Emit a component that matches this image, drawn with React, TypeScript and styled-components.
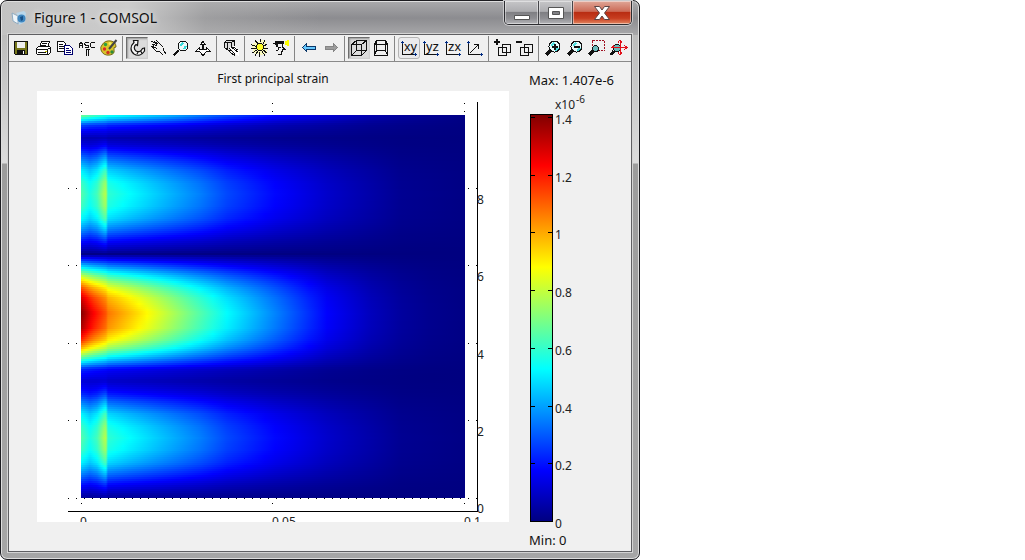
import React from 'react';
import styled, { createGlobalStyle, css } from 'styled-components';

const Global = createGlobalStyle`
  * { box-sizing: border-box; }
  body { margin: 0; background: #fff; color: #111; font-family: "Noto Sans", "Open Sans", sans-serif; }
`;

const Frame = styled.main`
  display: flex;
  flex-direction: column;
  width: 100%;
  max-width: 640px;
  min-height: 100vh;
  padding: 0 7px 7px;
  border: 1px solid #1c1c20;
  border-radius: 7px;
  box-shadow: inset 0 0 0 1px #dedede;
  background:
    linear-gradient(to right, #c2c2c2 0, #cccccc 20%, rgba(176, 176, 176, 0.5) 32%, transparent 50%) no-repeat 0 0 / 100% 34px,
    linear-gradient(#aaaaac, #8c8c90 50%, #a8a8aa) no-repeat 0 0 / 100% 34px,
    linear-gradient(#b4b4b4 0, #dcdcdc 162px, #9c9c9c 163px, #a6a6a6);
`;

const TitleBar = styled.header`
  display: flex;
  align-items: flex-start;
  justify-content: space-between;
  height: 33px;
`;

const Caption = styled.h1`
  display: flex;
  align-items: center;
  gap: 7px;
  margin: 0;
  padding: 6px 0 0 3px;
  font: 400 14px/22px "Noto Sans", "Open Sans", sans-serif;
  text-shadow: 0 0 6px #fff;
`;

const CaptionButtons = styled.div`
  display: flex;
  border: 1px solid #2c2c30;
  border-top: 0;
  border-radius: 0 0 5px 5px;
  box-shadow: 0 0 0 1px #c9c9cb;
  overflow: hidden;
`;

const CaptionButton = styled.button<{ $close?: boolean }>`
  display: grid;
  place-items: center;
  width: ${p => (p.$close ? 58 : 34)}px;
  height: 23px;
  padding: 0;
  border: 0;
  border-right: ${p => (p.$close ? '0' : '1px solid #46464a')};
  box-shadow: inset 0 0 0 1px rgba(255, 255, 255, 0.45);
  background: ${p =>
    p.$close
      ? 'linear-gradient(#e0a798, #cc6b57 45%, #b92d13 50%, #c73d20 75%, #e28760)'
      : 'linear-gradient(#c6c6c8, #adadb0 45%, #7f7f83 50%, #8e8e92 75%, #b4b4b8)'};
`;

const Client = styled.section`
  flex: 1;
  display: flex;
  flex-direction: column;
  border: 1px solid #5f5f62;
  background: #f0f0f0;
  box-shadow: 0 0 0 1px #d4d4d4;
`;

const Toolbar = styled.div`
  display: flex;
  align-items: center;
  height: 27px;
  padding-left: 1px;
  border-bottom: 1px solid #8a8a8a;
`;

const ToolButton = styled.button<{ $look?: 'pressed' | 'raised' }>`
  display: grid;
  place-items: center;
  flex: none;
  width: 22px;
  height: 22px;
  padding: 0;
  border: 1px solid transparent;
  background: none;
  ${p => p.$look === 'pressed' && css`
    border-color: #6e6e6e #cfcfcf #cfcfcf #6e6e6e;
    background: #dcdcdc;
    box-shadow: inset 1px 1px 2px #999;
  `}
  ${p => p.$look === 'raised' && css`
    border-color: #b4b4b4;
    border-radius: 3px;
    background: #eaeaec;
  `}
`;

const Separator = styled.span`
  flex: none;
  width: 1px;
  height: 25px;
  margin: 0 3px 0 2px;
  background: #858585;
`;

const Figure = styled.div`
  display: grid;
  grid-template-columns: minmax(0, 472fr) minmax(0, 102fr);
  grid-template-rows: 29px auto;
  column-gap: 20px;
  padding: 0 0 0 28px;
`;

const PlotTitle = styled.h2`
  margin: 0;
  padding-top: 8px;
  text-align: center;
  font-size: 12px;
  line-height: 18px;
  font-weight: 400;
`;

const Plot = styled.svg`
  display: block;
  width: 100%;
  background: #fff;
  overflow: hidden;
`;

const Legend = styled.aside`
  grid-column: 2;
  grid-row: 1 / span 2;
  display: flex;
  flex-direction: column;
  padding-top: 9px;
  font-size: 13px;
  line-height: 18px;
`;

const Scale = styled.svg`
  display: block;
  width: 100%;
  overflow: visible;
`;

/* ---------- strain field ---------- */

type Curve = [number, number][];

function sample(c: Curve, t: number) {
  if (t <= c[0][0]) return c[0][1];
  for (let i = 1; i < c.length; i++) {
    if (t <= c[i][0]) {
      const [a, va] = c[i - 1];
      const [b, vb] = c[i];
      return va + ((vb - va) * (t - a)) / (b - a);
    }
  }
  return c[c.length - 1][1];
}

const centreX: Curve = [[0, 1], [11, 0.89], [26, 0.79], [27, 0.76], [66, 0.63], [109, 0.49], [146, 0.375], [184, 0.28], [246, 0.125], [290, 0.06], [330, 0.02], [384, 0.005]];
const sideX: Curve = [[0, 0.46], [9, 0.4], [16, 0.44], [23, 0.54], [25, 0.55], [27, 0.42], [49, 0.375], [79, 0.32], [119, 0.25], [146, 0.195], [194, 0.13], [250, 0.07], [320, 0.018], [384, 0.005]];
const edgeX: Curve = [[0, 0.48], [26, 0.38], [90, 0.29], [140, 0.2], [200, 0.12], [300, 0.035], [384, 0.005]];

const centreY: Curve = [[139, 0], [143, 0.12], [149, 0.28], [155, 0.43], [161, 0.57], [167, 0.69], [173, 0.8], [183, 0.92], [198, 1], [213, 0.96], [225, 0.84], [233, 0.7], [242, 0.49], [249, 0.31], [254, 0.17], [260, 0.12], [266, 0.06], [274, 0.02], [280, 0]];
const upperY: Curve = [[14, 0.06], [23, 0.06], [32, 0.26], [42, 0.5], [55, 0.78], [68, 0.95], [79, 1], [91, 0.96], [104, 0.82], [116, 0.56], [126, 0.31], [135, 0.12], [139, 0.02], [144, 0]];
const lowerY: Curve = [[258, 0], [266, 0.06], [276, 0.28], [286, 0.52], [299, 0.8], [312, 0.95], [323, 1], [335, 0.95], [348, 0.8], [360, 0.54], [370, 0.3], [379, 0.12], [384, 0.04]];
const edgeY: Curve = [[0, 1], [5, 0.7], [10, 0.36], [16, 0.2], [23, 0.06], [30, 0]];

const strain = (x: number, y: number) =>
  sample(centreX, x) * sample(centreY, y) +
  sample(sideX, x) * (sample(upperY, y) + sample(lowerY, y)) +
  sample(edgeX, x) * sample(edgeY, y);

function jet(v: number) {
  const ch = (c: number) => Math.round(255 * Math.max(0, Math.min(1, 1.5 - Math.abs(4 * v - c))));
  return `rgb(${ch(3)},${ch(2)},${ch(1)})`;
}

const W = 384;
const H = 383;
const STRIP = 2;
const stopsX = [0, 5, 9, 13, 16, 20, 23, 25, 27, 34, 42, 49, 58, 66, 79, 94, 109, 119, 132, 146, 165, 184, 194, 210, 228, 246, 268, 290, 320, 350, 384];
const strips = Array.from({ length: Math.ceil(H / STRIP) }, (_, i) => i * STRIP);

const HeatMap = () => (
  <g transform="translate(44 24)" shapeRendering="crispEdges">
    <defs>
      {strips.map(y => (
        <linearGradient id={`row${y}`} key={y}>
          {stopsX.map(x => <stop key={x} offset={x / W} stopColor={jet(strain(x, y + 1))} />)}
        </linearGradient>
      ))}
    </defs>
    {strips.map(y => <rect key={y} y={y} width={W} height={Math.min(STRIP, H - y)} fill={`url(#row${y})`} />)}
  </g>
);

const gridY = [97, 174, 252, 329, 407];
const gridX = [44, 235, 427];

const StrainPlot = () => (
  <Plot viewBox="0 0 472 431" role="img" aria-label="First principal strain">
    <HeatMap />
    <g fill="#000" shapeRendering="crispEdges">
      {gridY.map(y => [31, 39, 431, 439].map(x => <rect key={`${x}-${y}`} x={x} y={y} width="1" height="1" />))}
      {gridX.map(x => [12, 20, 412].map(y => <rect key={`${x}-${y}`} x={x} y={y} width="1" height="1" />))}
      {Array.from({ length: 48 }, (_, i) => <rect key={i} x={47 + i * 8} y="407" width="1" height="1" />)}
      <rect x="31" y="420" width="410" height="1" />
      <rect x="440" y="11" width="1" height="410" />
    </g>
    <g fontSize="12" fill="#222">
      {['8', '6', '4', '2', '0'].map((t, i) => <text key={t} x="440" y={113 + Math.round(i * 77.3)}>{t}</text>)}
      {['0', '0.05', '0.1'].map((t, i) => <text key={t} x={[43, 235, 427][i]} y="435">{t}</text>)}
    </g>
  </Plot>
);

const ColourScale = () => (
  <Scale viewBox="0 0 102 442" role="img" aria-label="Colour scale from 0 to 1.4e-6">
    <defs>
      <linearGradient id="jet" x1="0" y1="1" x2="0" y2="0">
        {[0, 0.125, 0.375, 0.625, 0.875, 1].map(v => <stop key={v} offset={v} stopColor={jet(v)} />)}
      </linearGradient>
    </defs>
    <g fontSize="12" fill="#222">
      <text x="26" y="20">x10</text>
      <text x="47" y="14" fontSize="10">-6</text>
      {['1.4', '1.2', '1', '0.8', '0.6', '0.4', '0.2', '0'].map((t, i) => (
        <text key={t} x="26" y={35 + Math.round(i * 57.7)}>{t}</text>
      ))}
    </g>
    <rect x="1.5" y="25.5" width="22" height="407" fill="url(#jet)" stroke="#000" />
    <g fill="#000" shapeRendering="crispEdges">
      {[0, 1, 2, 3, 4, 5, 6].map(i => {
        const y = 28 + Math.round(i * 57.7);
        return <path key={i} d={`M2 ${y}h4v1h-4zM19 ${y}h4v1h-4z`} />;
      })}
    </g>
  </Scale>
);

/* ---------- toolbar icons, 18 x 18 ---------- */

const K = '#111';
const Axes = ({ label }: { label?: string }) => (
  <>
    <path d="M2.5 2v13.500h14" />
    <path d="M1 3h3M2.500 1.500v3M15 14v3M16.500 15.500h-3" stroke="#002a80" />
    {label ? (
      <text x="4" y="12" fontSize="13" fill={K} stroke="none">{label}</text>
    ) : (
      <path d="M4 14l8-8M8 5.500h4.500v4" />
    )}
  </>
);
const Lens = ({ sign }: { sign?: string }) => (
  <>
    <path d="M6.500 11.500l-4.500 4.500" strokeWidth="3" />
    <circle cx="10.500" cy="7.500" r="5.500" fill="#e8fbfb" />
    <path d="M7 7l3-3M11 12l3-3" stroke="#4de0e0" strokeWidth="2" />
    {sign && <path d={sign} strokeWidth="2" />}
  </>
);

const icons: Record<string, React.ReactNode> = {
  save: <><path d="M2.500 2.500h13v13h-12l-1-1z" fill="#77771a" /><path d="M5 3h8v6h-8z" fill="#f0f0f0" stroke="none" /><path d="M5 11h8v4h-8z" fill="#111" stroke="none" /><path d="M11 12h1v3h-1z" fill="#fff" stroke="none" /></>,
  print: <><path d="M5.500 8.500l2-6h8l-2 6" fill="#fff" /><path d="M8 4.500h5M7 6.500h5" /><path d="M2.500 9.500l2-2h11l1 1v5l-2 2h-11l-1-1z" fill="#fff" /><path d="M2.500 10.500h11v5M13.500 10.500l3-2M4 13.500h8" /><path d="M11 12h2v1h-2z" fill="#cc0" stroke="none" /></>,
  copy: <><path d="M1.500 2.500h6l2 2v8h-8z" fill="#fff" /><path d="M3 5.500h4M3 7.500h5M3 9.500h5" /><path d="M8.500 6.500h5l3 3v6h-8z" fill="#fff" stroke="#00006e" /><path d="M10 9.500h3M10 11.500h5M10 13.500h5" stroke="#00006e" /></>,
  text: <><path d="M1.500 8.500v-3l1-2h1l1 2v3M2 6.500h3M10.500 3.500h-3l-1 1v1l1 .5h2l1 1v1l-1 .5h-3M16.500 3.500h-3l-1 1v3l1 1h3" /><path d="M7.500 10.500h4M8.500 10.500v6M10.500 10.500v6" /></>,
  colours: <g shapeRendering="auto"><path d="M2 6q3-5 9-4 5 1 5 6-3 0-2 3 1 4-4 5-7 1-9-5-1-3 1-5z" fill="#d8c428" stroke="#7a6a18" /><circle cx="5.500" cy="5.500" r="1.700" fill="#2ba03c" stroke="none" /><circle cx="10" cy="4.500" r="1.500" fill="#f6f060" stroke="none" /><circle cx="4.500" cy="10" r="1.700" fill="#e02828" stroke="none" /><circle cx="8" cy="13.500" r="1.700" fill="#d03020" stroke="none" /><circle cx="12" cy="13" r="1.700" fill="#2d8a38" stroke="none" /><path d="M9 10l7.500-9" stroke="#444" strokeWidth="2" /></g>,
  orbit: <path shapeRendering="auto" d="M10 1.500H5.500l.5 2C2 7 2 12 6 15c4 2.500 8 1 10.500-3v-3l-2 .5c-1.500 3-4 4-6.500 2.500-2.500-2-2-5 0-6.500l1.500 1zM9 15l1-2M12.500 11.500l1.500 3" fill="#f6f6f6" strokeWidth="1.200" />,
  pan: <path d="M1.500 2.500l3 1 3 3M4.500 2.500l4 3M6.500 1.500l4 4 3 3M7.500 6.500l-5-1 2 3-3-1 5 5h3l4 4M13.500 8.500v3l3 4M5 8l2 2" />,
  zoom: <><path d="M6.500 11.500l-5 5" strokeWidth="2" /><circle cx="11" cy="7" r="5" fill="#effafa" /><path d="M8 7l3-3M12 10l2-3" stroke="#38dada" strokeWidth="2" /></>,
  dolly: <path d="M9 2.500l-2.500 3h2v5h-3v-2l-4 4h4l3.500 4 3.500-4h4l-4-4v2h-3v-5h2z" fill="#fff" />,
  scene: <><path d="M2.500 3.500l2-2h8v7l-2 3h-4l-4-3zM2.500 3.500h7v6M9.500 3.500l3-2M5.500 4v6" fill="#ddd" /><path d="M7 9l7 7 3 1v-6l-5-4z" fill="#fff" stroke="none" /><path d="M5.500 10.500l4 4 4 2M9 8l7 5M7 9l6 6M11 8l5 3" /></>,
  light: <><path d="M11 1l5 1v5l1 7-5 2-9-2-1-9z" fill="#fafac0" stroke="none" /><path d="M10.500 0v3M5 1l3 4M15 1l-2 4M1 5.500l5 2M17 5l-3 2M1 9.500h5M14 9.500h4M2 14l5-3M5 17l3-5M9.500 13v5M12 12l3 5M13 11l4 3" /><circle cx="10" cy="8" r="3.500" fill="#ff2" /></>,
  headlight: <><path d="M3 2h9v3H3zM3 4h3v4H4z" fill={K} stroke="none" /><path d="M1 4.500h10M10.500 5v3l2 2h-2v2h-1v3h-4M6 8v3l-2 1M7 8h2" /><path d="M13 2l4-1v6l-4-1z" fill="#ff0" stroke="none" /></>,
  back: <path d="M2.500 8.500l4-4v2.500h8.500v3h-8.500v2.500z" fill="#65c8ff" stroke="#0b3768" />,
  forward: <path d="M15.500 8.500l-4-4v2.500h-8.500v3h8.500v2.500z" fill="#9c9c9c" stroke="#858585" />,
  cube: <path d="M1.500 5.500h10v11h-10zM6.500 1.500h10v10h-10zM1.500 5.500l5-4M11.500 5.500l5-4M1.500 16.500l5-5M11.500 16.500l5-5" />,
  perspective: <path d="M4.500 1.500h9l2 4v11h-13v-11zM2.500 5.500h13M4.500 1.500v10h9v-10M2.500 16l2-4.500M15.500 16l-2-4.500" />,
  xy: <Axes label="xy" />,
  yz: <Axes label="yz" />,
  zx: <Axes label="zx" />,
  axes: <Axes />,
  add: <><path d="M0 3h6M3 0v6" strokeWidth="2" /><path d="M4.500 8.500h8v8h-8zM8.500 5.500h8v8h-8z" /></>,
  remove: <><path d="M0 3h6" strokeWidth="2" /><path d="M4.500 8.500h8v8h-8zM8.500 5.500h8v8h-8z" /></>,
  zoomIn: <Lens sign="M8 8h6M11 5v6" />,
  zoomOut: <Lens sign="M8 8h6" />,
  zoomBox: <><path d="M4.500 1.500h12v10h-12z" stroke="#a01020" strokeDasharray="2 1" /><path d="M5 12l-4 4" strokeWidth="3" /><circle cx="7.500" cy="9.500" r="3" fill="#6ababa" /></>,
  extents: <><path d="M4 12l-3 4" strokeWidth="3" /><circle cx="7" cy="9" r="3.500" fill="#6ababa" /><path d="M10 1v15M2 8.500h15M8 3.500l2-2.500 2 2.500M8 13.500l2 2.500 2-2.500M14.500 6.500l2.500 2-2.500 2M4 6.500l-2.500 2" stroke="#e0101a" /></>,
};

const groups: string[][] = [
  ['save', 'print', 'copy', 'text', 'colours'],
  ['orbit', 'pan', 'zoom', 'dolly'],
  ['scene'],
  ['light', 'headlight'],
  ['back', 'forward'],
  ['cube', 'perspective'],
  ['xy', 'yz', 'zx', 'axes'],
  ['add', 'remove'],
  ['zoomIn', 'zoomOut', 'zoomBox', 'extents'],
];
const looks: Record<string, 'pressed' | 'raised'> = { orbit: 'pressed', cube: 'pressed', xy: 'raised' };

export default function App() {
  return (
    <Frame>
      <Global />
      <TitleBar>
        <Caption>
          <svg width="16" height="16" viewBox="0 0 16 16" aria-hidden="true">
            <path d="M1 3l6 3v8l-5-3z" fill="#eef5fa" stroke="#8eabc2" />
            <path d="M5 3l8-2 2 2-1 9-6 3-1-9z" fill="#b9d6ea" />
            <circle cx="10.500" cy="8.500" r="4" fill="#3f86bf" />
            <path d="M9 7l3-1v4l-2 1z" fill="#174f88" />
          </svg>
          Figure 1 - COMSOL
        </Caption>
        <CaptionButtons>
          <CaptionButton aria-label="Minimize">
            <svg width="18" height="14"><path d="M1.500 9.500h15v4h-15z" fill="#fff" stroke="#555" /></svg>
          </CaptionButton>
          <CaptionButton aria-label="Maximize">
            <svg width="18" height="14"><path d="M1.500 1.500h15v11h-15zM5.500 5.500v3h7v-3z" fill="#fff" fillRule="evenodd" stroke="#555" /></svg>
          </CaptionButton>
          <CaptionButton $close aria-label="Close">
            <svg width="18" height="14"><path d="M1.500 .5h5l2.500 3.500 2.500-3.500h5l-5 6.500 5 6.500h-5l-2.500-3.500-2.500 3.500h-5l5-6.500z" fill="#fff" stroke="#5a4545" /></svg>
          </CaptionButton>
        </CaptionButtons>
      </TitleBar>
      <Client>
        <Toolbar role="toolbar" aria-label="Figure tools">
          {groups.map((g, i) => (
            <React.Fragment key={i}>
              {i > 0 && <Separator />}
              {g.map(n => (
                <ToolButton key={n} $look={looks[n]} aria-label={n}>
                  <svg width="18" height="18" fill="none" stroke={K} shapeRendering="crispEdges">{icons[n]}</svg>
                </ToolButton>
              ))}
            </React.Fragment>
          ))}
        </Toolbar>
        <Figure>
          <PlotTitle>First principal strain</PlotTitle>
          <StrainPlot />
          <Legend>
            <span>Max: 1.407e-6</span>
            <ColourScale />
            <span>Min: 0</span>
          </Legend>
        </Figure>
      </Client>
    </Frame>
  );
}
